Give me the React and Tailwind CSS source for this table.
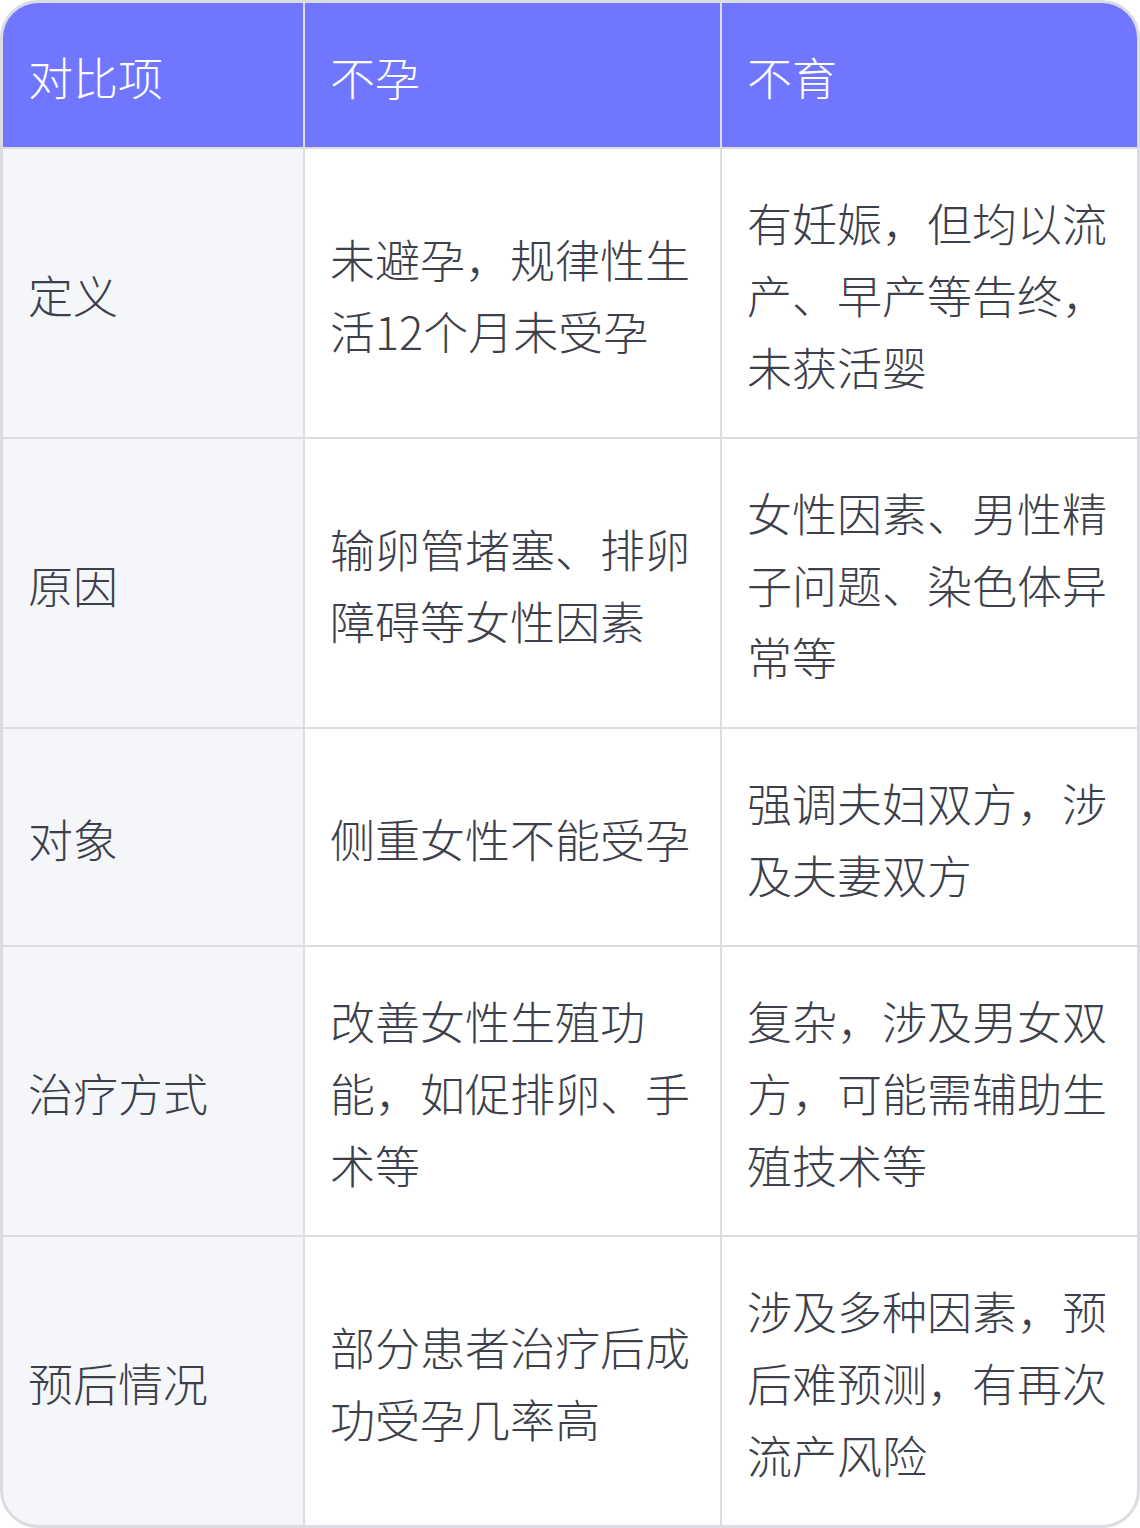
import React from 'react';

const header = ['对比项', '不孕', '不育'];

const rows = [
  ['定义', '未避孕，规律性生活12个月未受孕', '有妊娠，但均以流产、早产等告终，未获活婴'],
  ['原因', '输卵管堵塞、排卵障碍等女性因素', '女性因素、男性精子问题、染色体异常等'],
  ['对象', '侧重女性不能受孕', '强调夫妇双方，涉及夫妻双方'],
  ['治疗方式', '改善女性生殖功能，如促排卵、手术等', '复杂，涉及男女双方，可能需辅助生殖技术等'],
  ['预后情况', '部分患者治疗后成功受孕几率高', '涉及多种因素，预后难预测，有再次流产风险'],
];

const cell = 'pl-[25px] pr-5 pt-[38px] pb-[34px] flex items-center';

export default function App() {
  return (
    <div
      className="w-[1140px] bg-white"
      style={{ fontFamily: '"Noto Sans CJK SC", "Noto Sans", sans-serif' }}
    >
      <div className="rounded-[38px] border-[3px] border-[#dcdde3] overflow-hidden bg-[#dcdde3]">
        <div className="grid grid-cols-[300px_415px_415px] gap-[2px] text-[45px] leading-[72px] font-extralight">
          {header.map((h) => (
            <div key={h} className={`bg-[#7076ff] text-white ${cell}`}>
              {h}
            </div>
          ))}
          {rows.map((r) => (
            <React.Fragment key={r[0]}>
              <div className={`bg-[#f5f6fa] text-[#3d3f4b] ${cell}`}>{r[0]}</div>
              <div className={`bg-white text-[#3d3f4b] ${cell}`}>{r[1]}</div>
              <div className={`bg-white text-[#3d3f4b] ${cell}`}>{r[2]}</div>
            </React.Fragment>
          ))}
        </div>
      </div>
    </div>
  );
}
